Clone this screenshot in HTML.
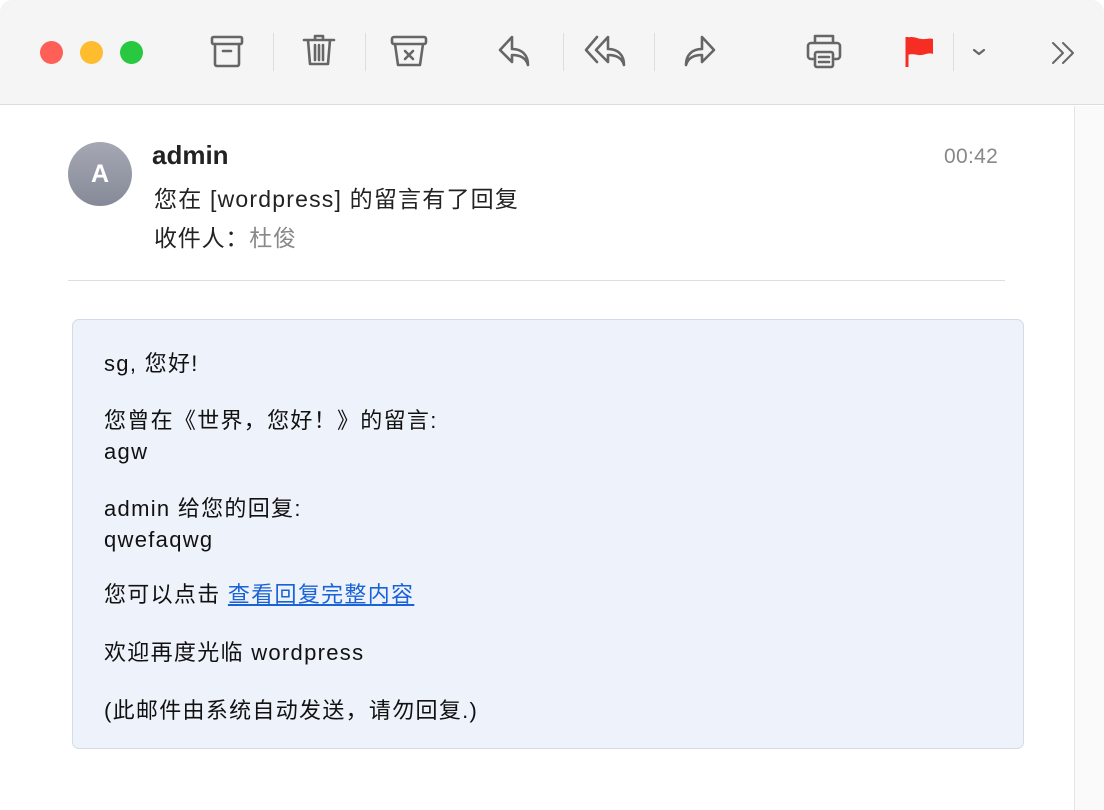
<!DOCTYPE html>
<html><head><meta charset="utf-8"><style>
*{margin:0;padding:0;box-sizing:border-box}
body{width:1104px;height:810px;background:#fff;font-family:"Liberation Sans","Noto Sans CJK SC",sans-serif;position:relative;overflow:hidden;color:#1f1f1f}
.tb{position:absolute;left:0;top:0;width:1104px;height:105px;background:#f5f5f5;border-bottom:1px solid #dcdcdc;border-radius:12px 12px 0 0}
.dot{position:absolute;top:41px;width:23px;height:23px;border-radius:50%}
.sep{position:absolute;top:33px;width:1px;height:38px;background:#dedede}
svg.i{position:absolute;fill:none;stroke:#666;stroke-width:2.6;stroke-linecap:round;stroke-linejoin:round}
.t{position:absolute;white-space:nowrap}
.box{position:absolute;left:72px;top:319px;width:952px;height:430px;background:#eef3fb;border:1px solid #d3dbe6;border-radius:7px}
.b{position:absolute;left:104px;font-size:22px;line-height:31px;color:#111;white-space:nowrap;letter-spacing:1.3px}
</style></head><body>
<div class="tb">
<div class="dot" style="left:40px;background:#fe5f57"></div>
<div class="dot" style="left:80px;background:#febc2e"></div>
<div class="dot" style="left:120px;background:#28c840"></div>
<svg class="i" style="left:208px;top:33px" width="40" height="40" viewBox="0 0 40 40"><rect x="4" y="4" width="30" height="7" rx="1.5"/><path d="M7 11v20a2 2 0 0 0 2 2h20a2 2 0 0 0 2-2V11M15 18h8"/></svg>
<div class="sep" style="left:273px"></div>
<svg class="i" style="left:300px;top:31px" width="40" height="40" viewBox="0 0 40 40"><path d="M4 9h30M15 9V5h8v4M8 9l2 24h18l2-24M15 14v15M19 14v15M23 14v15"/></svg>
<div class="sep" style="left:365px"></div>
<svg class="i" style="left:390px;top:33px" width="40" height="40" viewBox="0 0 40 40"><rect x="2" y="4" width="34" height="7" rx="2"/><path d="M5 11l3 21h22l3-21M15 18l8 8M23 18l-8 8"/></svg>
<svg class="i" style="left:496px;top:33px" width="40" height="40" viewBox="0 0 40 40"><path d="M16 4L4 17l12 12v-7c8 0 14 3 16 10 0-10-6-16-16-16z"/></svg>
<div class="sep" style="left:563px"></div>
<svg class="i" style="left:584px;top:33px" width="50" height="40" viewBox="0 0 50 40"><path d="M13 4L2 17l11 12M24 4L12 17l12 12v-7c8 0 14 3 16 10 0-10-6-16-16-16z"/></svg>
<div class="sep" style="left:654px"></div>
<svg class="i" style="left:680px;top:33px" width="40" height="40" viewBox="0 0 40 40"><path d="M22 4l12 13-12 12v-7c-8 0-14 3-16 10 0-10 6-16 16-16z"/></svg>
<svg class="i" style="left:803px;top:32px" width="44" height="40" viewBox="0 0 44 40"><path d="M12 11V4h18v7M10 27H8a3 3 0 0 1-3-3V14a3 3 0 0 1 3-3h26a3 3 0 0 1 3 3v10a3 3 0 0 1-3 3h-2"/><rect x="12" y="20" width="18" height="15" rx="2"/><path d="M16 25h10M16 30h10"/></svg>
<svg style="position:absolute;left:904px;top:35px" width="34" height="34" viewBox="0 0 34 34"><path d="M3 2v30" stroke="#f52d23" stroke-width="3"/><path d="M3 3c7-3 11 2 18 1 3 0 5-1 8 0v15c-5-2-9 2-15 1-4-1-8-1-11 0z" fill="#f52d23"/></svg>
<div class="sep" style="left:953px"></div>
<svg class="i" style="left:970px;top:45px;stroke-width:2.2" width="18" height="14" viewBox="0 0 18 14"><path d="M4 5l5 4 5-4"/></svg>
<svg class="i" style="left:1050px;top:40px;stroke-width:2" width="30" height="26" viewBox="0 0 30 26"><path d="M3 3l10 10L3 23M13 3l10 10-10 10"/></svg>
</div>
<div style="position:absolute;left:1074px;top:106px;width:1px;height:704px;background:#e3e3e3"></div>
<div style="position:absolute;left:1075px;top:106px;width:29px;height:704px;background:#fafafa"></div>
<div style="position:absolute;left:68px;top:142px;width:64px;height:64px;border-radius:50%;background:linear-gradient(#a5a8b3,#868a98);color:#fff;font-size:25px;font-weight:bold;text-align:center;line-height:64px">A</div>
<div class="t" style="left:152px;top:140px;font-size:26px;font-weight:bold;color:#222">admin</div>
<div class="t" style="left:944px;top:145px;font-size:21px;color:#888;letter-spacing:0.3px">00:42</div>
<div class="t" style="left:154px;top:180px;font-size:23px;color:#222;letter-spacing:1.2px">您在 [wordpress] 的留言有了回复</div>
<div class="t" style="left:154px;top:219px;font-size:23px;color:#222;letter-spacing:0.8px">收件人：<span style="color:#888">杜俊</span></div>
<div style="position:absolute;left:68px;top:280px;width:937px;height:1px;background:#dedede"></div>
<div class="box"></div>
<div class="b" style="top:348px">sg, 您好!</div>
<div class="b" style="top:405px">您曾在《世界，您好！》的留言:<br>agw</div>
<div class="b" style="top:493px">admin 给您的回复:<br>qwefaqwg</div>
<div class="b" style="top:579px">您可以点击 <span style="color:#1a63d6;text-decoration:underline">查看回复完整内容</span></div>
<div class="b" style="top:637px">欢迎再度光临 wordpress</div>
<div class="b" style="top:695px">(此邮件由系统自动发送，请勿回复.)</div>
</body></html>
